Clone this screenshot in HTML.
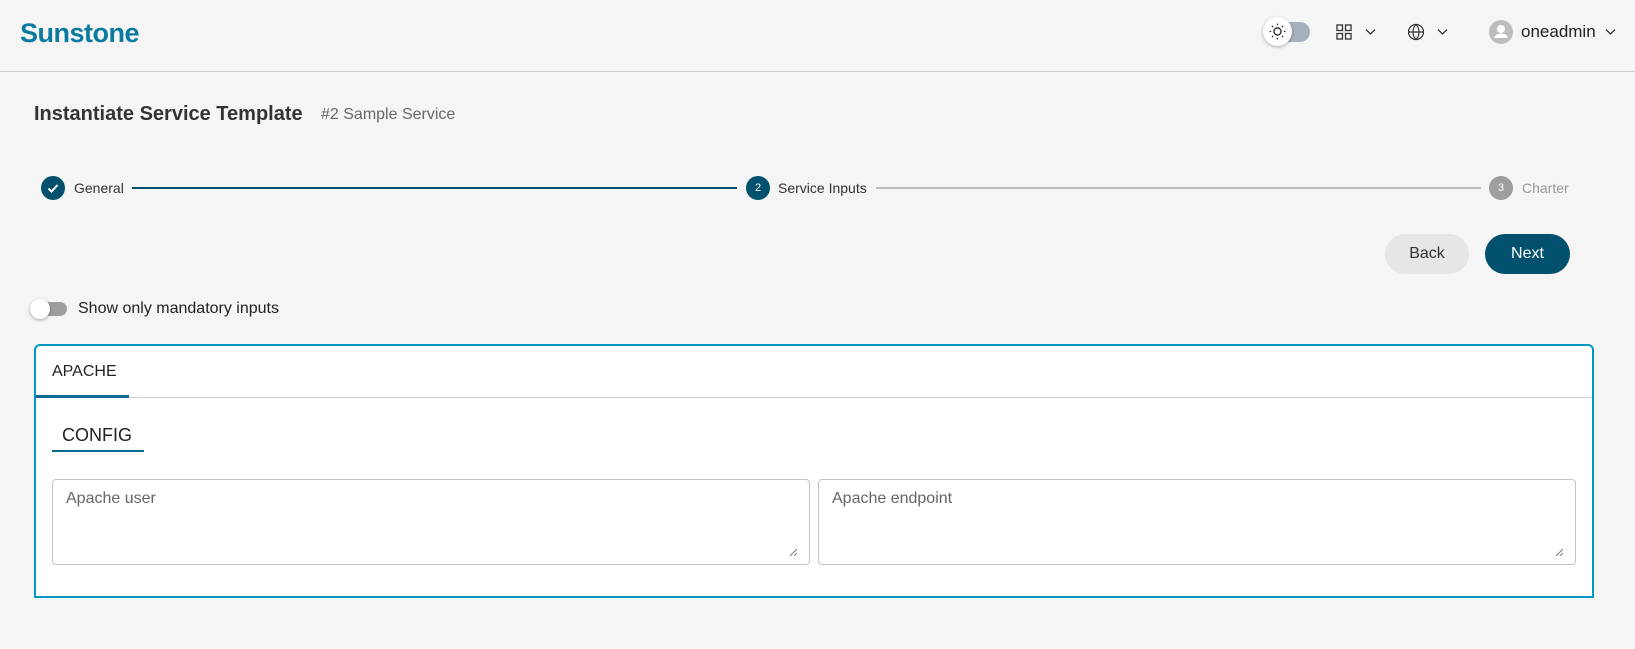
<!DOCTYPE html>
<html><head><meta charset="utf-8"><style>
*{box-sizing:border-box;margin:0;padding:0}
body{width:1635px;height:649px;background:#f5f5f5;font-family:"Liberation Sans","DejaVu Sans",sans-serif;position:relative;overflow:hidden;color:#222}
.a{position:absolute;white-space:nowrap}
.circ{position:absolute;width:24px;height:24px;border-radius:50%;color:#fff;font-size:11px;display:flex;align-items:center;justify-content:center}
.ta{position:absolute;background:#fff;border:1px solid #c4c4c4;border-radius:4px}
.ta span{position:absolute;left:13px;top:10px;font-size:16px;color:#666}
.ta svg{position:absolute;right:12px;bottom:8px}
</style></head><body>
<div class="a" style="left:0;top:71px;width:1635px;height:1px;background:#ccc"></div>
<div class="a" style="left:20px;top:18px;font-size:27px;font-weight:bold;color:#0b7aa0;letter-spacing:-0.5px">Sunstone</div>
<div class="a" style="left:1270px;top:22px;width:40px;height:20px;border-radius:10px;background:#a6b0bc"></div>
<div class="a" style="left:1263px;top:17px;width:29px;height:29px;border-radius:50%;background:#fff;box-shadow:0 1px 3px rgba(0,0,0,.3)"></div>
<svg class="a" style="left:1268px;top:22px" width="19" height="19" viewBox="0 0 24 24" fill="none" stroke="#222" stroke-width="1.6"><circle cx="12" cy="12" r="4.5"/><path d="M12 2v2M12 20v2M2 12h2M20 12h2M5 5l1.4 1.4M17.6 17.6L19 19M5 19l1.4-1.4M17.6 6.4L19 5"/></svg>
<svg class="a" style="left:1336px;top:24px" width="16" height="16" viewBox="0 0 16 16" fill="none" stroke="#333" stroke-width="1.3"><rect x="1" y="1" width="5.5" height="5.5"/><rect x="9.5" y="1" width="5.5" height="5.5"/><rect x="1" y="9.5" width="5.5" height="5.5"/><rect x="9.5" y="9.5" width="5.5" height="5.5"/></svg>
<svg class="a" style="left:1365px;top:28px" width="11" height="8" viewBox="0 0 11 8" fill="none" stroke="#333" stroke-width="1.3"><path d="M1 1.5l4.5 4.5 4.5-4.5"/></svg>
<svg class="a" style="left:1407px;top:23px" width="18" height="18" viewBox="0 0 24 24" fill="none" stroke="#333" stroke-width="1.6"><circle cx="12" cy="12" r="10"/><path d="M2 12h20M12 2c3 3 4 6 4 10s-1 7-4 10c-3-3-4-6-4-10s1-7 4-10z"/></svg>
<svg class="a" style="left:1437px;top:28px" width="11" height="8" viewBox="0 0 11 8" fill="none" stroke="#333" stroke-width="1.3"><path d="M1 1.5l4.5 4.5 4.5-4.5"/></svg>
<svg class="a" style="left:1489px;top:20px" width="24" height="24" viewBox="0 0 24 24"><circle cx="12" cy="12" r="12" fill="#bdbdbd"/><circle cx="12" cy="9" r="4" fill="#fff"/><path d="M5 18c1-3.5 4-4.5 7-4.5s6 1 7 4.5z" fill="#fff"/></svg>
<div class="a" style="left:1521px;top:22px;font-size:17px;color:#222">oneadmin</div>
<svg class="a" style="left:1605px;top:28px" width="11" height="8" viewBox="0 0 11 8" fill="none" stroke="#333" stroke-width="1.3"><path d="M1 1.5l4.5 4.5 4.5-4.5"/></svg>

<div class="a" style="left:34px;top:103px;font-size:20px;font-weight:bold;color:#333">Instantiate Service Template</div>
<div class="a" style="left:321px;top:106px;font-size:16px;color:#666">#2 Sample Service</div>

<div class="circ" style="left:41px;top:176px;background:#00506e"><svg width="14" height="14" viewBox="0 0 14 14" fill="none" stroke="#fff" stroke-width="2"><path d="M2.5 7.5l3 3 6-6.5"/></svg></div>
<div class="a" style="left:74px;top:180px;font-size:14px;color:#333">General</div>
<div class="a" style="left:132px;top:187px;width:605px;height:2px;background:#00506e"></div>
<div class="circ" style="left:746px;top:176px;background:#00506e">2</div>
<div class="a" style="left:778px;top:180px;font-size:14px;color:#333">Service Inputs</div>
<div class="a" style="left:876px;top:187px;width:605px;height:2px;background:#bdbdbd"></div>
<div class="circ" style="left:1489px;top:176px;background:#9e9e9e">3</div>
<div class="a" style="left:1522px;top:180px;font-size:14px;color:#999">Charter</div>

<div class="a" style="left:1385px;top:234px;width:84px;height:40px;border-radius:20px;background:#e6e6e6;font-size:16px;color:#333;text-align:center;line-height:40px">Back</div>
<div class="a" style="left:1485px;top:234px;width:85px;height:40px;border-radius:20px;background:#00506e;font-size:16px;color:#fff;text-align:center;line-height:40px">Next</div>

<div class="a" style="left:34px;top:302px;width:33px;height:14px;border-radius:7px;background:#9e9e9e"></div>
<div class="a" style="left:30px;top:299px;width:20px;height:20px;border-radius:50%;background:#fff;box-shadow:0 1px 3px rgba(0,0,0,.35)"></div>
<div class="a" style="left:78px;top:300px;font-size:16px;color:#222">Show only mandatory inputs</div>

<div class="a" style="left:34px;top:344px;width:1560px;height:254px;background:#fff;border:2px solid #0098c3;border-radius:6px 6px 0 0"></div>
<div class="a" style="left:36px;top:397px;width:1556px;height:1px;background:#ccc"></div>
<div class="a" style="left:36px;top:395px;width:93px;height:3px;background:#0b6a90"></div>
<div class="a" style="left:52px;top:363px;font-size:16px;color:#222">APACHE</div>
<div class="a" style="left:62px;top:425px;font-size:18px;color:#222">CONFIG</div>
<div class="a" style="left:52px;top:450px;width:92px;height:2px;background:#0b6a90"></div>
<div class="ta" style="left:52px;top:479px;width:758px;height:86px"><span>Apache user</span><svg width="8" height="8" viewBox="0 0 8 8" stroke="#777" stroke-width="1"><path d="M1 8L8 1M5 8L8 5"/></svg></div>
<div class="ta" style="left:818px;top:479px;width:758px;height:86px"><span>Apache endpoint</span><svg width="8" height="8" viewBox="0 0 8 8" stroke="#777" stroke-width="1"><path d="M1 8L8 1M5 8L8 5"/></svg></div>
</body></html>
